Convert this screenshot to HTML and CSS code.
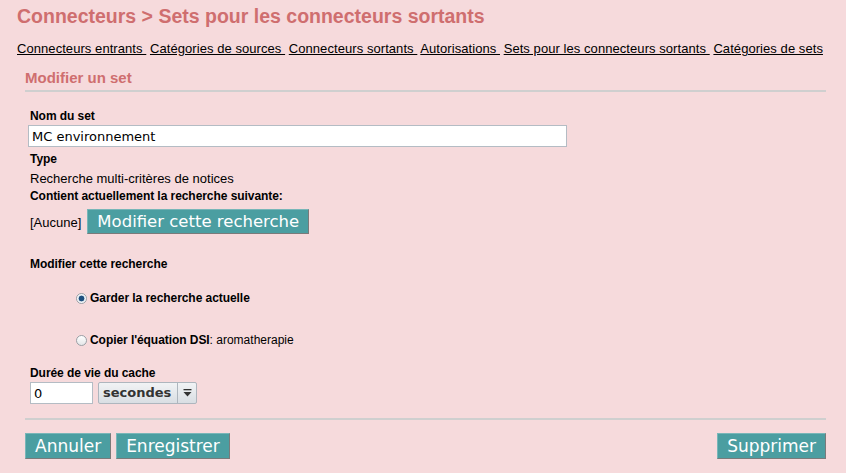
FILE: index.html
```html
<!DOCTYPE html>
<html lang="fr">
<head>
<meta charset="utf-8">
<title>Sets pour les connecteurs sortants</title>
<link rel="stylesheet" href="styles.css">
</head>
<body>
<h1 class="title">Connecteurs &gt; Sets pour les connecteurs sortants</h1>
<nav class="tabs"><a href="#">Connecteurs entrants&nbsp;</a> <a href="#">Catégories de sources&nbsp;</a> <a href="#">Connecteurs sortants&nbsp;</a> <a href="#">Autorisations&nbsp;</a> <a href="#">Sets pour les connecteurs sortants&nbsp;</a> <a href="#">Catégories de sets</a></nav>
<form class="form">
  <h3 class="form-title">Modifier un set</h3>
  <div class="form-body">
    <div class="lbl">Nom du set</div>
    <input class="name-input" type="text" value="MC environnement">
    <div class="lbl type-lbl">Type</div>
    <div class="txt">Recherche multi-critères de notices</div>
    <div class="lbl contient-lbl">Contient actuellement la recherche suivante:</div>
    <div class="search-row">
      <span class="txt">[Aucune]</span>
      <button type="button" class="btn">Modifier cette recherche</button>
    </div>
    <div class="lbl section-lbl">Modifier cette recherche</div>
    <div class="radios">
      <label class="radio-row first"><input type="radio" name="m" class="radio" checked><b>Garder la recherche actuelle</b></label>
      <label class="radio-row second"><input type="radio" name="m" class="radio"><b>Copier l'équation DSI</b><span class="plain">: aromatherapie</span></label>
    </div>
    <div class="lbl cache-lbl">Durée de vie du cache</div>
    <div class="cache-row">
      <input class="num-input" type="text" value="0">
      <div class="select">
        <span class="select-text">secondes</span>
        <span class="select-arrow"><svg width="9" height="8" viewBox="0 0 9 8"><rect x="0.5" y="0" width="8" height="1.3" fill="#333"/><path d="M0.5 3 H8.5 L4.5 7.5 Z" fill="#333"/></svg></span>
      </div>
    </div>
  </div>
  <div class="actions">
    <div class="actions-left">
      <button type="button" class="btn">Annuler</button>
      <button type="button" class="btn">Enregistrer</button>
    </div>
    <button type="button" class="btn">Supprimer</button>
  </div>
</form>
</body>
</html>
```
FILE: styles.css
```css
html, body {
  background: #f6dadc;
}
body {
  margin: 0;
  padding: 5px 20px 0 17px;
  font-family: "Liberation Sans", Arial, sans-serif;
  color: #000;
}
.title {
  margin: 0;
  font-size: 19.5px;
  line-height: 22px;
  font-weight: bold;
  color: #cf6e6f;
  white-space: nowrap;
}
.tabs {
  margin-top: 14px;
  font-size: 13px;
  line-height: 15px;
  letter-spacing: 0.065px;
  white-space: nowrap;
}
.tabs a {
  color: #000;
  text-decoration: underline;
}
.form {
  margin: 13px 0 0 8px;
}
.form-title {
  margin: 0;
  font-size: 15px;
  line-height: 17px;
  font-weight: bold;
  color: #cf6e6f;
  padding-bottom: 4px;
  border-bottom: 2px solid #cfcfcf;
}
.form-body {
  padding: 17px 0 0 5px;
}
.lbl {
  font-weight: bold;
  font-size: 12px;
  line-height: 14px;
  letter-spacing: -0.06px;
}
.txt {
  font-size: 13px;
  line-height: 15px;
}
.form-body > .txt {
  margin-top: 5px;
}
.name-input {
  display: block;
  box-sizing: border-box;
  margin: 2px 0 0 -2px;
  width: 539px;
  height: 22px;
  border: 1px solid #b4bcc4;
  background: #fff;
  padding: 0 3px;
  font: 13px "DejaVu Sans", sans-serif;
  color: #000;
  outline: none;
}
.type-lbl { margin-top: 5px; }
.contient-lbl { margin-top: 3px; }
.search-row {
  display: flex;
  align-items: center;
  gap: 6px;
  margin-top: 6px;
}
.search-row .txt { padding-top: 2px; }
.btn {
  box-sizing: border-box;
  height: 25px;
  padding: 0 9px;
  margin: 0;
  background: #4b9ea1;
  color: #fff;
  font: 16.5px "DejaVu Sans", sans-serif;
  line-height: 23px;
  border: 1px solid;
  border-color: #78b6b8 #7a7a7a #7a7a7a #78b6b8;
  border-radius: 0;
  cursor: pointer;
}
.section-lbl { margin-top: 23px; }
.radios {
  padding-left: 46px;
}
.radio-row {
  display: flex;
  align-items: center;
  font-size: 12px;
  line-height: 14px;
  height: 14px;
  letter-spacing: -0.06px;
}
.radio-row.first { margin-top: 20px; }
.radio-row.second { margin-top: 28px; }
.radio {
  appearance: none;
  -webkit-appearance: none;
  box-sizing: border-box;
  width: 11px;
  height: 11px;
  margin: 0 3px 0 0;
  border: 1px solid #9aa0a6;
  border-radius: 50%;
  background: linear-gradient(#ffffff, #e4e6e8);
  flex: none;
}
.radio:checked {
  background: radial-gradient(circle, #1e4f7e 0 2.6px, #dfe6ee 3.2px, #ffffff 4.5px);
}
.plain {
  font-weight: normal;
  letter-spacing: 0;
}
.cache-lbl { margin-top: 19px; }
.cache-row {
  display: flex;
  gap: 5px;
  margin-top: 2px;
}
.num-input {
  box-sizing: border-box;
  width: 63px;
  height: 22px;
  margin: 0;
  border: 1px solid #b4bcc4;
  background: #fff;
  padding: 0 3px;
  font: 13px "DejaVu Sans", sans-serif;
  color: #000;
  outline: none;
}
.select {
  box-sizing: border-box;
  display: flex;
  align-items: stretch;
  height: 22px;
  border: 1px solid #aeb6be;
  border-radius: 2px;
  background: linear-gradient(#f1f3f5, #d9dee3);
}
.select-text {
  padding: 0 6px 0 4px;
  font: bold 13px "DejaVu Sans", sans-serif;
  line-height: 20px;
  color: #333;
}
.select-arrow {
  display: flex;
  align-items: center;
  justify-content: center;
  width: 18px;
  border-left: 1px solid #aeb6be;
}
.actions {
  display: flex;
  justify-content: space-between;
  margin-top: 14px;
  padding-top: 13px;
  border-top: 2px solid #cfcfcf;
}
.actions .btn {
  height: 26px;
  line-height: 24px;
  font-size: 17px;
}
.actions-left {
  display: flex;
  gap: 5px;
}
```
